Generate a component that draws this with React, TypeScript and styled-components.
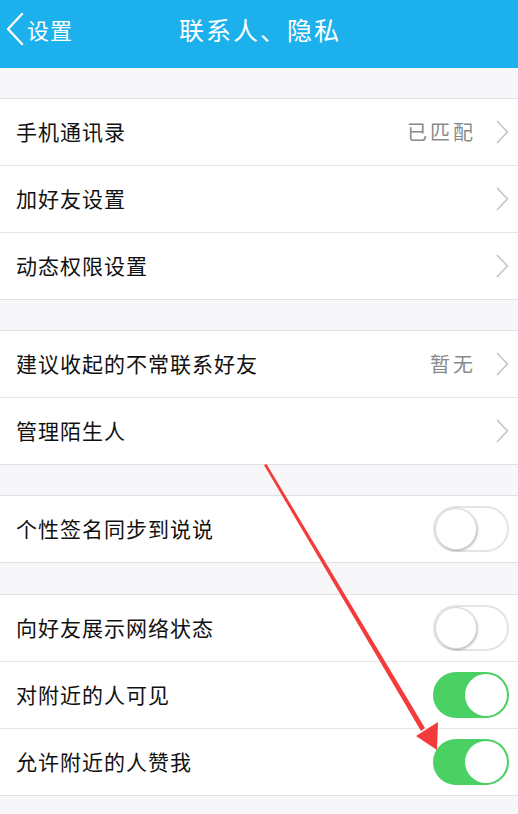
import React from 'react';
import styled, { createGlobalStyle } from 'styled-components';

const GlobalStyle = createGlobalStyle`
  body {
    margin: 0;
    background: #f7f7f9;
    font-family: "Noto Sans CJK SC", "Noto Sans", sans-serif;
  }
`;

const Page = styled.div`
  position: relative;
  width: 518px;
  height: 814px;
  overflow: hidden;
  background: #f7f7f9;
`;

const Header = styled.header`
  box-sizing: border-box;
  height: 68px;
  padding-bottom: 10px;
  background: #1cb1ec;
  display: grid;
  grid-template-columns: 1fr auto 1fr;
  align-items: center;
  color: #fff;
`;

const Back = styled.div`
  display: flex;
  align-items: center;
  gap: 3px;
  padding-left: 6px;
  font-size: 22px;
  letter-spacing: 1px;
`;

const Title = styled.h1`
  margin: 0;
  font-size: 25px;
  font-weight: 400;
  letter-spacing: 2px;
  transform: translateX(1px);
`;

const Group = styled.section<{ $gap?: number }>`
  margin-top: ${(p) => p.$gap ?? 30}px;
  background: #fff;
  border-top: 1px solid #e1e1e4;
  border-bottom: 1px solid #e1e1e4;
`;

const Row = styled.div`
  height: 66px;
  display: flex;
  align-items: center;
  padding: 0 9px 0 16px;

  & + & {
    border-top: 1px solid #e6e6e8;
  }
`;

const Label = styled.span`
  flex: 1;
  font-size: 21px;
  color: #111;
  letter-spacing: 1px;
  margin-top: -2px;
`;

const Value = styled.span`
  font-size: 20px;
  color: #8a8a8a;
  letter-spacing: 3px;
  margin-right: 20px;
  margin-top: -2px;
`;

const Track = styled.div<{ $on: boolean }>`
  position: relative;
  box-sizing: border-box;
  width: 76px;
  height: 46px;
  border-radius: 23px;
  background: ${(p) => (p.$on ? '#4bd163' : '#fff')};
  border: 2px solid ${(p) => (p.$on ? '#4bd163' : '#e4e4e4')};
`;

const Knob = styled.div<{ $on: boolean }>`
  position: absolute;
  top: 0;
  left: ${(p) => (p.$on ? '30px' : '0')};
  width: 42px;
  height: 42px;
  border-radius: 50%;
  background: #fff;
  box-shadow: ${(p) => (p.$on ? 'none' : '1px 1px 2px rgba(0,0,0,0.25)')};
  border: ${(p) => (p.$on ? '0' : '1px solid #d8d8d8')};
  box-sizing: border-box;
`;

const Footer = styled.p`
  margin: 15px 0 0;
  padding: 0 16px;
  font-size: 17px;
  line-height: 24px;
  color: #8e8e93;
  white-space: nowrap;
`;

const Overlay = styled.svg`
  position: absolute;
  inset: 0;
  pointer-events: none;
`;

const Chevron = ({ color = '#c7c7cc' }: { color?: string }) => (
  <svg width="13" height="24" viewBox="0 0 13 24">
    <polyline points="1.5,1.5 11.5,12 1.5,22.5" fill="none" stroke={color} strokeWidth="1.8" strokeLinecap="round" strokeLinejoin="round" />
  </svg>
);

const Switch = ({ on }: { on: boolean }) => (
  <Track $on={on}>
    <Knob $on={on} />
  </Track>
);

type Item = { label: string; value?: string; toggle?: boolean };

const groups: { gap?: number; items: Item[] }[] = [
  { gap: 30, items: [{ label: '手机通讯录', value: '已匹配' }, { label: '加好友设置' }, { label: '动态权限设置' }] },
  { gap: 30, items: [{ label: '建议收起的不常联系好友', value: '暂无' }, { label: '管理陌生人' }] },
  { gap: 30, items: [{ label: '个性签名同步到说说', toggle: false }] },
  {
    gap: 31,
    items: [
      { label: '向好友展示网络状态', toggle: false },
      { label: '对附近的人可见', toggle: true },
      { label: '允许附近的人赞我', toggle: true },
    ],
  },
];

export default function App() {
  return (
    <Page>
      <GlobalStyle />
      <Header>
        <Back>
          <svg width="18" height="34" viewBox="0 0 18 34">
            <polyline points="16,2 2,17 16,32" fill="none" stroke="#fff" strokeWidth="2.4" strokeLinecap="round" strokeLinejoin="round" />
          </svg>
          设置
        </Back>
        <Title>联系人、隐私</Title>
        <div />
      </Header>
      {groups.map((g, gi) => (
        <Group key={gi} $gap={g.gap}>
          {g.items.map((it) => (
            <Row key={it.label}>
              <Label>{it.label}</Label>
              {it.value && <Value>{it.value}</Value>}
              {it.toggle === undefined ? <Chevron /> : <Switch on={it.toggle} />}
            </Row>
          ))}
        </Group>
      ))}
      <Footer>开启后，附近的人可以为你点赞，点赞数会展示在资料卡中</Footer>
      <Overlay width="518" height="814" viewBox="0 0 518 814">
        <polygon points="264,465 266.5,464 425,728 421,731" fill="#f43a3a" />
        <polygon points="437,750 416,736 438,722" fill="#f43a3a" />
      </Overlay>
    </Page>
  );
}
